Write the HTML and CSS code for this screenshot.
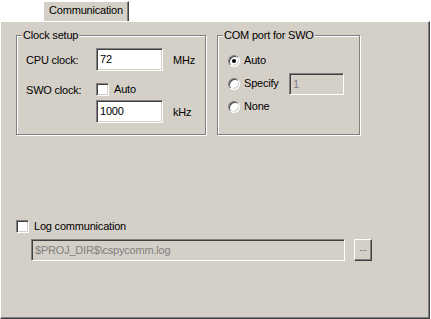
FILE: index.html
```html
<!DOCTYPE html>
<html lang="en">

<head>
    <meta charset="UTF-8">
    <title>Communication</title>
    <link rel="stylesheet" href="styles.css">
</head>
<body>
    <div class="tabs">
        <div class="tab">Communication</div>
    </div>
    <div class="panel">
        <div class="groups">
            <fieldset class="group clock">
                <legend>Clock setup</legend>
                <div class="clock-grid">
                    <span class="lbl">CPU clock:</span>
                    <span class="field">72</span>
                    <span class="unit">MHz</span>

                    <span class="lbl swo">SWO clock:</span>
                    <span class="check-row swo"><span class="check"></span>Auto</span>
                    <span></span>

                    <span></span>
                    <span class="field">1000</span>
                    <span class="unit">kHz</span>
                </div>
            </fieldset>
            <fieldset class="group com">
                <legend>COM port for SWO</legend>
                <div class="com-grid">
                    <span class="radio-row"><span class="radio on"></span>Auto</span>
                    <span></span>
                    <span class="radio-row"><span class="radio"></span>Specify</span>
                    <span class="field small disabled">1</span>
                    <span class="radio-row"><span class="radio"></span>None</span>
                    <span></span>
                </div>
            </fieldset>
        </div>

        <div class="log">
            <div class="check-row"><span class="check"></span>Log communication</div>
            <div class="path-row">
                <span class="field path disabled">$PROJ_DIR$\cspycomm.log</span>
                <span class="btn">...</span>
            </div>
        </div>
    </div>
</body>

</html>
```

FILE: styles.css
```css
body {
    margin: 0;
    padding: 0;
    background: #fff;
    font-family: "Liberation Sans", Arial, sans-serif;
    font-size: 11px;
    letter-spacing: -0.2px;
    color: #000;
}

.tabs {
    display: flex;
    padding-left: 43px;
    padding-top: 1px;
}

.tab {
    width: 86px;
    height: 20px;
    box-sizing: border-box;
    background: #d4d0c8;
    border-top: 1px solid #fff;
    border-left: 1px solid #fff;
    border-right: 1px solid #404040;
    box-shadow: inset -1px 0 #808080;
    text-align: center;
    line-height: 17px;
}

.panel {
    width: 430px;
    height: 298px;
    box-sizing: border-box;
    background: #d4d0c8;
    border-top: 1px solid #fff;
    border-left: 1px solid #fff;
    border-right: 1px solid #404040;
    border-bottom: 1px solid #404040;
    box-shadow: inset -1px -1px #808080;
    padding: 7px 0 0 15px;
}

.groups {
    display: flex;
    gap: 11px;
}

/* etched group boxes */
.group {
    margin: 0;
    padding: 0;
    min-width: 0;
    box-sizing: border-box;
    border: 1px solid #808080;
    box-shadow: inset 1px 1px #fff, 1px 1px #fff;
}

.group legend {
    margin-left: 5px;
    padding: 0 1px;
    line-height: 13px;
    background: #d4d0c8;
}

.clock {
    width: 190px;
    height: 106px;
}

.com {
    width: 143px;
    height: 106px;
}

.clock-grid {
    display: grid;
    grid-template-columns: 70px 77px auto;
    align-items: center;
    padding: 6px 0 0 9px;
}

.clock-grid .swo {
    margin: 12px 0 4px;
}

.com-grid {
    display: grid;
    grid-template-columns: 61px auto;
    grid-auto-rows: 23px;
    align-items: center;
    padding: 7px 0 0 10px;
}

/* sunken text boxes */
.field {
    display: block;
    height: 23px;
    box-sizing: border-box;
    background: #fff;
    border: 1px solid;
    border-color: #808080 #fff #fff #808080;
    box-shadow: inset 1px 1px #404040, inset -1px -1px #d4d0c8;
    padding: 2px 3px;
    line-height: 17px;
}

.clock-grid .field {
    width: 67px;
}

.field.small {
    width: 55px;
    height: 22px;
    line-height: 16px;
}

.field.disabled {
    background: #d4d0c8;
    color: #808080;
}

.check-row,
.radio-row {
    display: flex;
    align-items: center;
    line-height: 13px;
}

.check {
    width: 13px;
    height: 13px;
    box-sizing: border-box;
    background: #fff;
    border: 1px solid;
    border-color: #808080 #fff #fff #808080;
    box-shadow: inset 1px 1px #404040, inset -1px -1px #d4d0c8;
    margin-right: 5px;
}

.radio {
    position: relative;
    width: 12px;
    height: 12px;
    box-sizing: border-box;
    background: #fff;
    border-radius: 50%;
    border: 1px solid;
    border-color: #808080 #fff #fff #808080;
    box-shadow: inset 1px 1px #404040, inset -1px -1px #d4d0c8;
    margin-right: 4px;
}

.radio.on::after {
    content: "";
    position: absolute;
    left: 3px;
    top: 3px;
    width: 4px;
    height: 4px;
    border-radius: 50%;
    background: #000;
}

.log {
    margin-top: 85px;
}

.path-row {
    display: flex;
    align-items: center;
    gap: 9px;
    margin: 6px 0 0 15px;
}

.field.path {
    width: 314px;
    height: 22px;
    line-height: 16px;
}

.btn {
    width: 18px;
    height: 22px;
    box-sizing: border-box;
    background: #d4d0c8;
    border: 1px solid;
    border-color: #fff #404040 #404040 #fff;
    box-shadow: inset -1px -1px #808080;
    text-align: center;
    line-height: 16px;
    font-size: 9px;
    color: #404040;
}
```
